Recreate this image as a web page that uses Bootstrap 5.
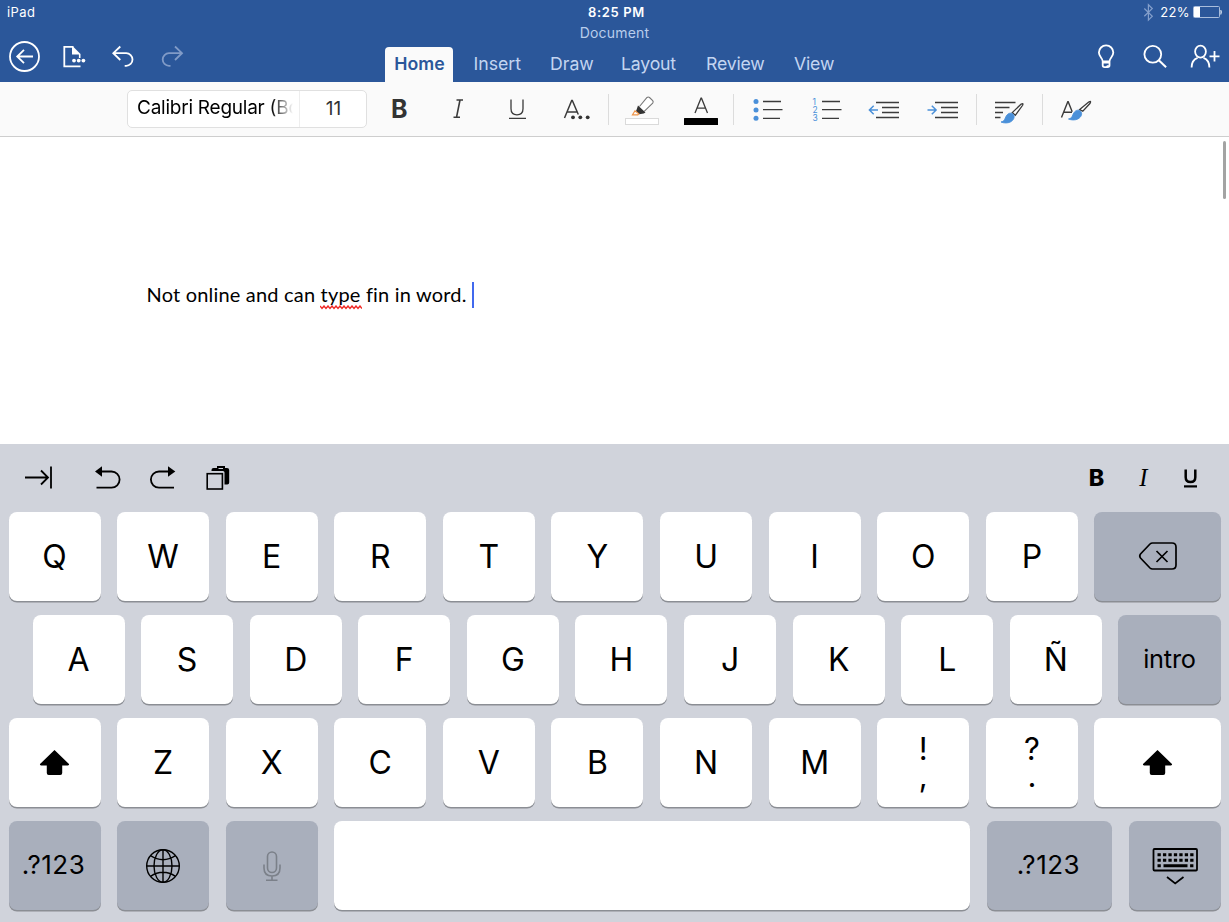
<!DOCTYPE html>
<html lang="en">
<head>
<meta charset="utf-8">
<meta name="viewport" content="width=device-width, initial-scale=1">
<title>Document</title>
<link rel="stylesheet" href="https://cdn.jsdelivr.net/npm/bootstrap@5.3.0/dist/css/bootstrap.min.css">
<style>
body{font-family:Inter,"Liberation Sans",sans-serif;width:1229px;height:922px;overflow:hidden;background:#fff;color:#000}
svg{display:block;flex:none}
svg text{font-family:Inter,"Liberation Sans",sans-serif}
.app-head{height:82px;background:#2b579a;color:#fff;display:grid;grid-template-columns:385px 1fr 385px;grid-template-rows:25px 57px}
.status-txt{font-size:13px;line-height:25px;letter-spacing:.4px}
.status-time{letter-spacing:.65px;padding-left:4px}
.doc-name{font-size:14px;line-height:16px;height:22px;color:#b9cdec;letter-spacing:.2px}
.tabs-row{height:35px}
.tabs-row .nav-link{padding:0;font-size:17.7px;letter-spacing:0;line-height:34px;color:#c3d5f1;white-space:nowrap}
.tabs-row .nav-link.active{background:#fafafa;color:#2b579a;font-weight:600;border-radius:4px 4px 0 0;width:68px;margin-right:20.500px;padding-left:1px;text-align:center}
.tab-insert{width:76.500px}.tab-draw{width:71px}.tab-layout{width:85px}.tab-review{width:88px}
.tabs-row .tab-layout,.tabs-row .tab-review,.tabs-row .tab-view{letter-spacing:-.2px}
.tools{height:55px;background:#fafafa;border-bottom:1px solid #cecece;padding-left:127px}
.font-box{width:240px;height:38px;margin-right:3px;border:1px solid #e0e0e0;border-radius:5px;background:#fff}
.font-name{width:171px;padding-left:9px;font-size:19px;line-height:33px;height:36px;overflow:hidden;white-space:nowrap;letter-spacing:-.24px;-webkit-mask-image:linear-gradient(90deg,#000 143px,transparent 165px);mask-image:linear-gradient(90deg,#000 143px,transparent 165px)}
.font-size{border-left:1px solid #eee;font-size:19px;line-height:36px;color:#333;flex:1;text-align:center;padding-left:1px}
.paper{height:307px;padding:4px 3.500px 0 0}
.typed{font-family:Lato,"Liberation Sans",sans-serif;font-size:20px;letter-spacing:.19px;line-height:28px;padding:139px 0 0 146.500px;white-space:pre}
.caret-bar{width:2px;height:26px;margin:2px 0 0 5.500px;background:#4169ee}
.squiggle{top:22.500px;left:-1px}
.scroll-thumb{width:3px;height:58px;background:#a3a3a3;border-radius:2px}
.kb{height:478px;background:#d0d3db}
.kb-bar{height:67.5px}
.kb-row{height:89px;margin-bottom:14.2px;padding:0 8.5px;gap:16.6px}
.kb-row-inset{padding-left:32.500px}
.key{flex:0 0 92px;height:89px;background:#fff;border-radius:8px;box-shadow:0 1.5px 0 #8b8e94;display:flex;align-items:center;justify-content:center;padding-top:1px;font-size:32px;line-height:1}
.key-dark{background:#a9afbc;font-size:26px;padding-top:0}
.key-num{letter-spacing:.5px;padding-right:2px;padding-bottom:1px}
.key-enter{font-size:25.300px;letter-spacing:-.2px;padding-bottom:2px}
.key-fill{flex:1 1 0}
.key-wide{flex-basis:125px}
.key-pair{flex-direction:column;justify-content:flex-start;font-size:31px;line-height:27px}
</style>
</head>
<body>
<header class="app-head">
  <div class="status-txt" style="padding-left:7px">iPad</div>
  <div class="status-txt status-time text-center fw-semibold">8:25 PM</div>
  <div class="status-txt d-flex justify-content-end align-items-center">
    <svg width="14" height="25" viewBox="1142 0 14 25" fill="none" stroke="#849fcb" stroke-width="1.2"><path d="M1144.3 8.5l8 7.8-3.9 3.8V4.700l3.900 3.800-8 7.800"/></svg>
    <span style="padding:0 2px 0 4.500px">22%</span>
    <svg width="37" height="25" viewBox="1192 0 37 25"><rect x="1193.500" y="6.500" width="26" height="11" rx="1" fill="none" stroke="#a9bddc"/><path d="M1194 7h6v10h-6z" fill="#fff"/><path d="M1220.800 10q1.600 2 0 4.500z" fill="#fff" stroke="#dce5f3" stroke-width=".6"/></svg>
  </div>
  <svg width="385" height="57" viewBox="0 25 385 57" fill="none" stroke="#fff" stroke-width="1.8">
    <circle cx="24.500" cy="56.500" r="14.500"/><path d="M33 56.500H17.500M24 49.800l-6.800 6.700 6.800 6.700"/>
    <path d="M80.500 66.300H64.300V46.800h9.200"/><path d="M72.500 46l8 8V58h-1.600v-3.500H72V46z" fill="#fff" stroke="none"/><g fill="#fff" stroke="none"><circle cx="74" cy="60.600" r="1.900"/><circle cx="78.700" cy="60.600" r="1.900"/><circle cx="83.400" cy="60.600" r="1.900"/></g>
    <path d="M120.300 46.500l-7 6.700 7 6.800M113.500 53.200h12.700a6.300 6.300 0 0 1 0 12.600h-1.500"/>
    <path stroke="#819bc7" d="M175 46.500l7 6.700-7 6.800M181.800 53.200H169a6.300 6.300 0 0 0 0 12.600h1.500"/>
  </svg>
  <div>
    <div class="doc-name text-center">Document</div>
    <nav class="nav tabs-row flex-nowrap">
      <a class="nav-link active">Home</a><a class="nav-link tab-insert">Insert</a><a class="nav-link tab-draw">Draw</a><a class="nav-link tab-layout">Layout</a><a class="nav-link tab-review">Review</a><a class="nav-link tab-view">View</a>
    </nav>
  </div>
  <svg width="385" height="57" viewBox="844 25 385 57" fill="none" stroke="#fff" stroke-width="1.800">
    <path d="M1102.700 61.300c0-3.200-3.800-4.700-3.800-8.700a7.200 7.200 0 0 1 14.400 0c0 4-3.800 5.500-3.800 8.700zM1102.700 61.300v4q0 1.800 1.800 1.800h1.400q1.800 0 1.800-1.800M1109.500 61.300v4q0 1.800-1.800 1.800h-2M1103 62.600h6.500"/>
    <circle cx="1152.800" cy="54.300" r="8.400"/><path d="M1158.800 60.300l7.300 7" stroke-width="2"/>
    <ellipse cx="1200.500" cy="51.600" rx="5.400" ry="6"/><path d="M1191.600 67.500c0-5.500 2.600-8.400 6-9.600M1203.500 57.900c3.300 1.200 5.900 4.100 5.900 9.600M1209.500 56.300h10M1214.500 51v10.500"/>
  </svg>
</header>

<div class="tools d-flex align-items-center">
  <div class="font-box d-flex"><div class="font-name">Calibri Regular (Bo</div><div class="font-size">11</div></div>
  <svg width="736" height="54" viewBox="370 82 736 54" fill="none" stroke="#3b3b3b" stroke-width="1.300">
    <text x="391" y="117.700" font-size="25" font-weight="700" fill="#333" stroke="none">B</text>
    <path d="M456.500 100h6.500M453.500 117.300h6.500M460 100l-3.500 17.300" stroke-width="1.600"/>
    <path d="M511 99.500v9.300q0 6 6 6t6-6v-9.300M509 118.300h17" />
    <path d="M564.500 118l7.200-17.500h.6l6 14M567.500 112h9.500" stroke-width="1.500"/>
    <g fill="#333" stroke="none"><circle cx="573" cy="117.300" r="1.900"/><circle cx="580.300" cy="117.300" r="1.900"/><circle cx="587.700" cy="117.300" r="1.900"/></g>
    <path d="M608.500 94v31M733.500 94v31M976.500 94v31M1042.500 94v31" stroke="#dcdcdc" stroke-width="1"/>
    <rect x="625.500" y="118.500" width="33" height="6" fill="#fff" stroke="#dadada" stroke-width="1"/>
    <path d="M639.500 106.500l7.500-9q1.200-1 2.500 0l3.200 3.200q1 1.200 0 2.500l-8.500 8.200" fill="#fff" stroke="#777" stroke-width="1.100"/>
    <path d="M638 105.500l7.500 7-1.800.9-4.500.9-3.200-3z" fill="#333" stroke="none"/><path d="M635 110.800l-2.500 4h5.300l1-1z" stroke="#ee9346" stroke-width="1.200"/>
    <path d="M695 113l6-14.800h.5l6 14.800M697 108.200h8.500"/><rect x="684" y="118" width="34" height="7" rx=".5" fill="#000" stroke="none"/>
    <g fill="#4a90d9" stroke="none"><circle cx="756" cy="101.500" r="2.500"/><circle cx="756" cy="110" r="2.500"/><circle cx="756" cy="118.300" r="2.500"/>
      <g font-size="8.500"><text x="812.500" y="104.500">1</text><text x="812.500" y="113">2</text><text x="812.500" y="121.300">3</text></g></g>
    <path d="M763 101.500h18M763 109.700h19.500M763 118.300h17M822 101.500h18M822 109.700h19.500M822 118.300h17"/>
    <path d="M876 102.500h23M882 107.500h17M882 112.500h17M876 117.500h23M935 102.500h23M941 107.500h17M941 112.500h17M935 117.500h23"/>
    <path d="M878 110h-8M873.700 105.700l-4.300 4.300 4.300 4.300M927.500 110h8M931.800 105.700l4.300 4.300-4.300 4.300" stroke="#4a90d9" stroke-width="1.500"/>
    <path d="M995 102.500h20.500M995 107.500h14.500M995 112.500h8M995 117.500h5.500"/>
    <path d="M1012.200 112.600l9-8.500q2.500-1.500 1.400 1.200l-7.300 10z" fill="#fff"/><path d="M1001 122c4-1 3.500-3 5.300-6 2-3.500 5.500-3.500 7-1.500 1.700 2 .8 5.500-3 7.500-2.500 1.300-6.500 1.200-9.300 0z" fill="#4a90d9" stroke="#4a90d9" stroke-width=".9"/>
    <path d="M1061.500 117.500l6.300-15.700h.4l4 10M1064 112.300h8" stroke-width="1.400"/>
    <g transform="translate(67.500 -3)"><path d="M1012.200 112.600l9-7.500q3-2 1.400 1.200l-7.300 8z" fill="#fff"/><path d="M1001 122c4-1 3.500-3 5.300-6 2-3.500 5.500-3.500 7-1.500 1.700 2 .8 5.500-3 7.500-2.500 1.300-6.500 1.200-9.300 0z" fill="#4a90d9" stroke="#4a90d9" stroke-width=".9"/></g>
  </svg>
</div>

<main class="paper d-flex justify-content-between">
  <div class="typed d-flex"><span>Not online and can <span class="position-relative">type<svg class="squiggle position-absolute" width="42" height="5" fill="none" stroke="#f02a26" stroke-width="1.400"><path d="M0 1l2 2.500 2-2.500 2 2.500 2-2.500 2 2.500 2-2.500 2 2.500 2-2.500 2 2.500 2-2.500 2 2.500 2-2.500 2 2.500 2-2.500 2 2.500 2-2.500 2 2.500 2-2.500 2 2.500 2-2.500 2 2.500"/></svg></span> fin in word.</span><span class="caret-bar"></span></div>
  <div class="scroll-thumb"></div>
</main>

<section class="kb">
  <div class="kb-bar d-flex justify-content-between">
    <svg width="240" height="67" viewBox="0 444 240 67" fill="none" stroke="#000" stroke-width="1.800">
      <path d="M25 477.500h22.500M41 470.500l7 7-7 7M51 466.500v22"/>
      <path d="M101 471.500h10.500a8 8 0 0 1 0 16.200H96.500"/><path d="M95 471.500l7-5.300v10.600z" fill="#000" stroke="none"/>
      <path d="M169 471.500h-10a8 8 0 0 0 0 16.200h15"/><path d="M175.300 471.500l-7.300-5.300v10.600z" fill="#000" stroke="none"/>
      <rect x="207.200" y="473.700" width="15.200" height="15.300" stroke-width="1.600"/>
      <path d="M211.500 471v-1q0-2 2-2h3.500v-2h8v2h2q2.200 0 2.200 2v12.500q0 2-2 2h-2.700V472.500q0-1.500-1.500-1.500z" fill="#000" stroke="none"/><path d="M218.500 468.500h4.500" stroke="#d0d3db" stroke-width="1"/>
    </svg>
    <svg width="150" height="67" viewBox="1079 444 150 67">
      <text x="1088.700" y="486" font-size="22.500" font-weight="800" textLength="15.500" lengthAdjust="spacingAndGlyphs">B</text>
      <text x="1139.300" y="486" font-size="24.500" style="font-family:'Liberation Serif',serif;font-style:italic">I</text>
      <path d="M1185.700 469.500v7.700q0 4.800 4.800 4.800t4.800-4.800v-7.700" fill="none" stroke="#000" stroke-width="2.500"/><path d="M1184 485.300h13v2.200h-13z"/>
    </svg>
  </div>
  <div class="kb-row d-flex">
    <div class="key">Q</div><div class="key">W</div><div class="key">E</div><div class="key">R</div><div class="key">T</div><div class="key">Y</div><div class="key">U</div><div class="key">I</div><div class="key">O</div><div class="key">P</div>
    <div class="key key-dark key-fill"><svg width="40" height="30" viewBox="1138 541 40 30" fill="none" stroke="#000" stroke-width="1.700"><path d="M1153.500 543h19.500q4 0 4 4v18q0 4-4 4h-19.500q-1.500 0-2.500-1l-9.500-10q-1.500-2 0-4l9.500-10q1-1 2.500-1zM1157.500 551l11 11M1168.500 551l-11 11"/></svg></div>
  </div>
  <div class="kb-row kb-row-inset d-flex">
    <div class="key">A</div><div class="key">S</div><div class="key">D</div><div class="key">F</div><div class="key">G</div><div class="key">H</div><div class="key">J</div><div class="key">K</div><div class="key">L</div><div class="key">Ñ</div>
    <div class="key key-dark key-fill key-enter">intro</div>
  </div>
  <div class="kb-row d-flex">
    <div class="key pt-0"><svg width="31" height="27" viewBox="0 0 32 28"><path d="M16 1L31 15.500q.5 1.500-1 1.500h-6v8q0 2-2 2H10q-2 0-2-2v-8H2q-1.500 0-1-1.500z"/></svg></div>
    <div class="key">Z</div><div class="key">X</div><div class="key">C</div><div class="key">V</div><div class="key">B</div><div class="key">N</div><div class="key">M</div>
    <div class="key key-pair"><span class="mt-3">!</span><span>,</span></div><div class="key key-pair"><span class="mt-3">?</span><span>.</span></div>
    <div class="key key-fill pt-0"><svg width="31" height="27" viewBox="0 0 32 28"><path d="M16 1L31 15.500q.5 1.500-1 1.500h-6v8q0 2-2 2H10q-2 0-2-2v-8H2q-1.500 0-1-1.500z"/></svg></div>
  </div>
  <div class="kb-row d-flex mb-0">
    <div class="key key-dark key-num">.?123</div>
    <div class="key key-dark"><svg width="36" height="36" viewBox="-18 -18 36 36" fill="none" stroke="#000" stroke-width="1.400"><circle r="16.300"/><ellipse rx="9" ry="16.300"/><path d="M0-16.300v32.600M-16.300 0h32.600M-12.500-10.300q12.500 8 25 0M-12.500 10.300q12.500-8 25 0"/></svg></div>
    <div class="key key-dark"><svg width="20" height="30" viewBox="262 851 20 30" fill="none" stroke="#7b8089" stroke-width="1.600"><rect x="267.500" y="852" width="9" height="20.500" rx="4.500"/><path d="M264 864.500v3.500q0 8 8 8t8-8v-3.500M272 876v4M266 880.200h11.500"/></svg></div>
    <div class="key key-fill"></div>
    <div class="key key-dark key-wide key-num">.?123</div>
    <div class="key key-dark"><svg width="46" height="40" viewBox="1151.500 846.500 46 40"><rect x="1153" y="849.500" width="43.500" height="21.500" rx="1" fill="none" stroke="#000" stroke-width="1.800"/><path d="M1157 855.300h36M1157 860.700h36" stroke="#000" stroke-width="3" stroke-dasharray="3.300 2.150" fill="none"/><path d="M1157 864.700h3.300v3h-3.300zM1163 864.700h24v3h-24zM1189.600 864.700h3.300v3h-3.300z"/><path d="M1166.500 877.500l8.200 6.500 8.300-6.500" fill="none" stroke="#000" stroke-width="1.700"/></svg></div>
  </div>
</section>
<script src="https://cdn.jsdelivr.net/npm/bootstrap@5.3.0/dist/js/bootstrap.bundle.min.js"></script>
</body>
</html>
